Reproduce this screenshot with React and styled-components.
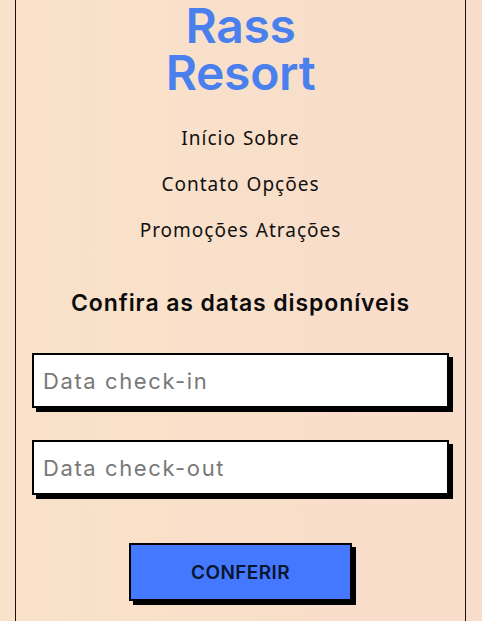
import styled, { createGlobalStyle } from "styled-components";

const GlobalStyle = createGlobalStyle`
  * { box-sizing: border-box; }
  html, body {
    margin: 0;
    padding: 0;
    background: linear-gradient(90deg, #F9E2C9 0%, #F8DDCB 100%);
    min-height: 100vh;
  }
`;

const Page = styled.div`
  margin: 0 16px 0 15px;
  min-height: 621px;
  border-left: 1px solid #1a1010;
  border-right: 1px solid #1a1010;
  background: linear-gradient(90deg, #F9E2C9 0%, #F8DDCB 100%);
  display: flex;
  flex-direction: column;
  align-items: center;
  font-family: Inter, "Noto Sans", sans-serif;
`;

const Title = styled.h1`
  margin: 0;
  padding-top: 2px;
  color: #4A80EE;
  font-family: Inter, "Noto Sans", sans-serif;
  font-size: 48px;
  font-weight: 600;
  line-height: 47px;
  letter-spacing: -0.3px;
  text-align: center;
  width: 180px;
`;

const Nav = styled.nav`
  margin-top: 31px;
  display: flex;
  flex-direction: column;
  align-items: center;
  gap: 23px;
`;

const NavRow = styled.div`
  display: flex;
  gap: 7px;
  font-family: "Noto Sans", Lato, sans-serif;
  font-size: 19px;
  line-height: 23px;
  color: #111;
  letter-spacing: 1px;
`;

const Heading = styled.h2`
  margin: 47px 0 0;
  font-family: Inter, "Noto Sans", sans-serif;
  font-size: 23px;
  font-weight: 600;
  color: #0b0b0b;
  letter-spacing: 0.9px;
`;

const Form = styled.form`
  width: 100%;
  padding: 0 16px;
  margin-top: 36px;
  display: flex;
  flex-direction: column;
  align-items: center;
  gap: 32px;
`;

const Field = styled.input`
  width: 100%;
  height: 55px;
  border: 2px solid #000;
  box-shadow: 4px 4px 0 #000;
  background: #fff;
  padding: 0 9px;
  font-family: Inter, "Noto Sans", sans-serif;
  font-size: 22px;
  letter-spacing: 1.6px;
  outline: none;

  &::placeholder {
    color: #787878;
  }
`;

const Button = styled.button`
  margin-top: 16px;
  width: 223px;
  height: 58px;
  background: #4479FF;
  border: 2px solid #000;
  box-shadow: 4px 4px 0 #000;
  color: #0a1530;
  font-family: Inter, "Noto Sans", sans-serif;
  font-size: 19px;
  font-weight: 600;
  letter-spacing: 0.4px;
  cursor: pointer;
`;

const links = [
  ["Início", "Sobre"],
  ["Contato", "Opções"],
  ["Promoções", "Atrações"],
];

export default function App() {
  return (
    <>
      <GlobalStyle />
      <Page>
        <Title>Rass Resort</Title>
        <Nav>
          {links.map((row, i) => (
            <NavRow key={i}>
              {row.map((l) => (
                <span key={l}>{l}</span>
              ))}
            </NavRow>
          ))}
        </Nav>
        <Heading>Confira as datas disponíveis</Heading>
        <Form onSubmit={(e) => e.preventDefault()}>
          <Field placeholder="Data check-in" />
          <Field placeholder="Data check-out" />
          <Button type="submit">CONFERIR</Button>
        </Form>
      </Page>
    </>
  );
}
